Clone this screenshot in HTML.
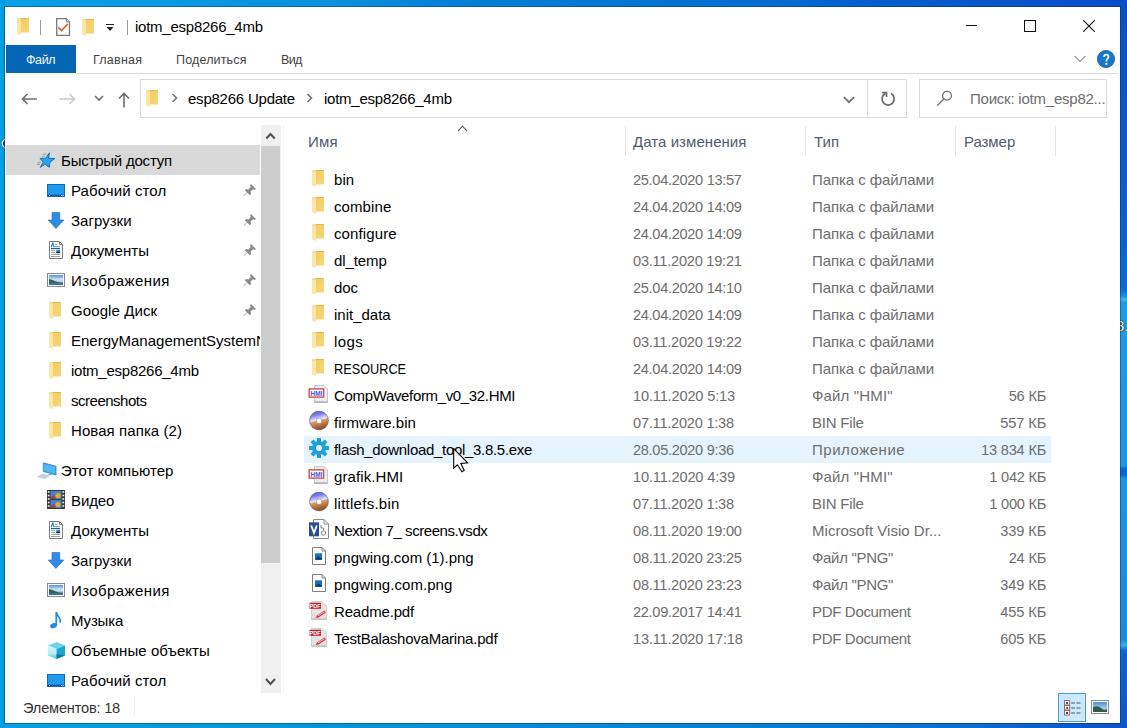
<!DOCTYPE html>
<html><head><meta charset="utf-8">
<style>
html,body{margin:0;padding:0;}
body{width:1127px;height:728px;position:relative;overflow:hidden;font-family:"Liberation Sans", sans-serif;
background:linear-gradient(90deg,#07A0E8 0%,#0A84DA 40%,#0470D6 60%,#0B4FC8 97%,#1E9BE0 100%);}
.t{position:absolute;white-space:nowrap;}
.win{position:absolute;left:4px;top:6px;width:1115px;height:716px;background:#fff;border:1px solid rgba(10,40,80,0.42);background-clip:padding-box;}
.abs{position:absolute;}
</style></head><body>
<div class="abs" style="left:0;top:0;width:1127px;height:7px;background:linear-gradient(90deg,#0AA0E8 0%,#0A90DD 30%,#0580D8 40%,#056CCF 70%,#0560CF 75%,#0A4CC6 100%)"></div>
<div class="abs" style="left:0;top:722px;width:1127px;height:6px;background:linear-gradient(90deg,#07A2E2 0%,#0892D8 35%,#0585D4 60%,#0870CF 85%,#0B50C8 100%)"></div>
<div class="abs" style="left:0;top:0;width:5px;height:728px;background:linear-gradient(90deg,#00A2EA,#009DE2 50%,#0E96D0)"></div>
<div class="abs" style="left:1120px;top:0;width:7px;height:728px;background:linear-gradient(180deg,#0B4EC7 0%,#0A5CCF 27.5%,#0A6AD6 39.8%,#1A90DE 40.7%,#3CB8EA 41.1%,#1E9CE0 41.6%,#1E96DE 64%,#0A66D8 64.4%,#0A66D8 65.2%,#1E96DE 65.8%,#1A8CDD 87.9%,#3AB0E8 88.6%,#0A62D2 89.4%,#0B55C8 100%)"></div>
<div class="t" style="left:1116px;top:318px;font-size:15px;line-height:15px;color:#fff;text-shadow:0 0 1.5px #000,0 0 1px #000">8.</div>
<svg class="abs" style="left:0;top:136px" width="8" height="15"><path d="M6.5 2.5 Q3 5 3 7.5 Q3 10 6.5 12.5" fill="none" stroke="#102030" stroke-width="2.6"/><path d="M5.5 2.5 Q2.2 5 2.2 7.5 Q2.2 10 5.5 12.5" fill="none" stroke="#fff" stroke-width="1.3"/></svg>
<div class="win"></div>

<svg style="position:absolute;left:17px;top:18px" width="13" height="18" viewBox="0 0 13 18" ><defs><linearGradient id="fg" x1="0" y1="0" x2="1" y2="1"><stop offset="0" stop-color="#F3CB60"/><stop offset="1" stop-color="#F6D77C"/></linearGradient></defs><rect x="3" y="0" width="9" height="14.5" fill="url(#fg)"/><rect x="3" y="0" width="9" height="1" fill="#E5B84A"/><path d="M0 0.5 H4 V17 L0 15.5 Z" fill="#FBE6A6"/><path d="M0 0.5 H4 V1.5 H0Z" fill="#EFD080"/></svg>
<div class="abs" style="left:40px;top:20px;width:1px;height:15px;background:#9A9A9A"></div>
<svg style="position:absolute;left:56px;top:18px" width="15" height="18" viewBox="0 0 15 18" ><path d="M0.7 0.7 H10.3 L13.5 3.9 V17.3 H0.7 Z" fill="#FAFCFE" stroke="#7A7A7A" stroke-width="1.3"/><path d="M10.3 0.7 V3.9 H13.5" fill="#E8E8E8" stroke="#7A7A7A" stroke-width="1"/><path d="M2.3 9.3 L5.5 12.5 L11.8 6" fill="none" stroke="#DC6028" stroke-width="1.7"/></svg>
<svg style="position:absolute;left:82px;top:19px" width="13" height="18" viewBox="0 0 13 18" ><defs><linearGradient id="fg" x1="0" y1="0" x2="1" y2="1"><stop offset="0" stop-color="#F3CB60"/><stop offset="1" stop-color="#F6D77C"/></linearGradient></defs><rect x="3" y="0" width="9" height="14.5" fill="url(#fg)"/><rect x="3" y="0" width="9" height="1" fill="#E5B84A"/><path d="M0 0.5 H4 V17 L0 15.5 Z" fill="#FBE6A6"/><path d="M0 0.5 H4 V1.5 H0Z" fill="#EFD080"/></svg>
<div class="abs" style="left:106px;top:24px;width:8px;height:1px;background:#222"></div>
<svg style="position:absolute;left:106px;top:27px" width="8" height="5" viewBox="0 0 8 5" ><path d="M0.5 0 H7.5 L4 4Z" fill="#222"/></svg>
<div class="abs" style="left:127px;top:20px;width:1px;height:15px;background:#9A9A9A"></div>
<div class="t" style="left:135px;top:17px;font-size:15px;line-height:20px;color:#000;letter-spacing:-0.248px;">iotm_esp8266_4mb</div>
<div class="abs" style="left:966px;top:25px;width:11px;height:1px;background:#111"></div>
<div class="abs" style="left:1024px;top:20px;width:10px;height:10px;border:1px solid #111"></div>
<svg style="position:absolute;left:1083px;top:20px" width="12" height="12" viewBox="0 0 12 12" ><path d="M0.3 0.3 L11.7 11.7 M11.7 0.3 L0.3 11.7" stroke="#111" stroke-width="1.1"/></svg>
<div class="abs" style="left:6px;top:45px;width:70px;height:28px;background:#0465B4"></div>
<div class="t" style="left:26px;top:52px;font-size:12.5px;line-height:16px;color:#F4F8FF;letter-spacing:-0.413px;">Файл</div>
<div class="t" style="left:93px;top:52px;font-size:12.5px;line-height:16px;color:#444;letter-spacing:0.232px;">Главная</div>
<div class="t" style="left:176px;top:52px;font-size:12.5px;line-height:16px;color:#444;letter-spacing:0.16px;">Поделиться</div>
<div class="t" style="left:281px;top:52px;font-size:12.5px;line-height:16px;color:#444;letter-spacing:-0.61px;">Вид</div>
<div class="abs" style="left:76px;top:73px;width:1042px;height:1px;background:#DADBDC"></div>
<svg style="position:absolute;left:1074px;top:55px" width="12" height="8" viewBox="0 0 12 8" ><path d="M0.5 1 L6 6.5 L11.5 1" fill="none" stroke="#9A9A9A" stroke-width="1.2"/></svg>
<svg style="position:absolute;left:1097px;top:50px" width="18" height="18" viewBox="0 0 18 18" ><circle cx="9" cy="9" r="8.6" fill="#1776CC" stroke="#0E5CAA" stroke-width="0.8"/><path d="M7.1 6.9 Q7.1 4.6 9.3 4.6 Q11.5 4.6 11.5 6.6 Q11.5 8 10.3 8.9 Q9.3 9.6 9.3 11.6" fill="none" stroke="#E8FAFF" stroke-width="1.8"/><rect x="8.3" y="12.8" width="2" height="2" fill="#E8FAFF"/></svg>
<svg style="position:absolute;left:21px;top:93px" width="17" height="12" viewBox="0 0 17 12" ><path d="M1.5 6 H16 M6.5 1 L1.5 6 L6.5 11" fill="none" stroke="#6D6D6D" stroke-width="1.6"/></svg>
<svg style="position:absolute;left:59px;top:93px" width="17" height="12" viewBox="0 0 17 12" ><path d="M0.5 6 H15 M10.5 1 L15.5 6 L10.5 11" fill="none" stroke="#C9C9C9" stroke-width="1.6"/></svg>
<svg style="position:absolute;left:94px;top:95px" width="10" height="7" viewBox="0 0 10 7" ><path d="M1 1 L5 5 L9 1" fill="none" stroke="#6D6D6D" stroke-width="1.6"/></svg>
<svg style="position:absolute;left:118px;top:92px" width="12" height="16" viewBox="0 0 12 16" ><path d="M6 15.5 V1.5 M1 6.5 L6 1.5 L11 6.5" fill="none" stroke="#6D6D6D" stroke-width="1.6"/></svg>
<div class="abs" style="left:140px;top:79px;width:765px;height:37px;border:1px solid #D9D9D9"></div>
<svg style="position:absolute;left:146px;top:90px" width="13" height="18" viewBox="0 0 13 18" ><defs><linearGradient id="fg" x1="0" y1="0" x2="1" y2="1"><stop offset="0" stop-color="#F3CB60"/><stop offset="1" stop-color="#F6D77C"/></linearGradient></defs><rect x="3" y="0" width="9" height="14.5" fill="url(#fg)"/><rect x="3" y="0" width="9" height="1" fill="#E5B84A"/><path d="M0 0.5 H4 V17 L0 15.5 Z" fill="#FBE6A6"/><path d="M0 0.5 H4 V1.5 H0Z" fill="#EFD080"/></svg>
<svg style="position:absolute;left:171px;top:93px" width="8" height="10" viewBox="0 0 8 10" ><path d="M1.5 1 L5.5 5 L1.5 9" fill="none" stroke="#6D6D6D" stroke-width="1.5"/></svg>
<div class="t" style="left:188px;top:89px;font-size:15px;line-height:20px;color:#000;letter-spacing:-0.227px;">esp8266 Update</div>
<svg style="position:absolute;left:306px;top:93px" width="8" height="10" viewBox="0 0 8 10" ><path d="M1.5 1 L5.5 5 L1.5 9" fill="none" stroke="#6D6D6D" stroke-width="1.5"/></svg>
<div class="t" style="left:324px;top:89px;font-size:15px;line-height:20px;color:#000;letter-spacing:-0.248px;">iotm_esp8266_4mb</div>
<svg style="position:absolute;left:843px;top:96px" width="12" height="8" viewBox="0 0 12 8" ><path d="M0.8 1 L6 6.2 L11.2 1" fill="none" stroke="#6D6D6D" stroke-width="1.7"/></svg>
<div class="abs" style="left:867px;top:80px;width:1px;height:37px;background:#D9D9D9"></div>
<svg style="position:absolute;left:880px;top:91px" width="16" height="16" viewBox="0 0 16 16" ><path d="M11 2.6 A6.1 6.1 0 1 1 5.6 2.4" fill="none" stroke="#6A6A6A" stroke-width="1.7"/><path d="M2.2 1.7 H6.5 V5.9" fill="none" stroke="#6A6A6A" stroke-width="1.7"/></svg>
<div class="abs" style="left:919px;top:79px;width:186px;height:37px;border:1px solid #D9D9D9"></div>
<svg style="position:absolute;left:936px;top:90px" width="17" height="17" viewBox="0 0 17 17" ><circle cx="11" cy="5.8" r="4.4" fill="none" stroke="#6A6A6A" stroke-width="1.2"/><path d="M7.8 9 L1.2 15.6" stroke="#6A6A6A" stroke-width="1.3"/></svg>
<div class="t" style="left:970px;top:89px;font-size:15px;line-height:20px;color:#6D6D6D;letter-spacing:-0.225px;">Поиск: iotm_esp82...</div>
<div class="abs" style="left:625px;top:126px;width:1px;height:30px;background:#E5E5E5"></div>
<div class="abs" style="left:805px;top:126px;width:1px;height:30px;background:#E5E5E5"></div>
<div class="abs" style="left:955px;top:126px;width:1px;height:30px;background:#E5E5E5"></div>
<div class="abs" style="left:1055px;top:126px;width:1px;height:30px;background:#E5E5E5"></div>
<svg style="position:absolute;left:457px;top:125px" width="11" height="7" viewBox="0 0 11 7" ><path d="M1 6 L5.5 1.2 L10 6" fill="none" stroke="#5A5A5A" stroke-width="1.1"/></svg>
<div class="t" style="left:308px;top:132px;font-size:15px;line-height:20px;color:#4E5B6E;letter-spacing:0.253px;">Имя</div>
<div class="t" style="left:633px;top:132px;font-size:15px;line-height:20px;color:#4E5B6E;letter-spacing:0.055px;">Дата изменения</div>
<div class="t" style="left:814px;top:132px;font-size:15px;line-height:20px;color:#4E5B6E;">Тип</div>
<div class="t" style="left:964px;top:132px;font-size:15px;line-height:20px;color:#4E5B6E;letter-spacing:-0.063px;">Размер</div>
<svg style="position:absolute;left:312px;top:170px" width="13" height="18" viewBox="0 0 13 18" ><defs><linearGradient id="fg" x1="0" y1="0" x2="1" y2="1"><stop offset="0" stop-color="#F3CB60"/><stop offset="1" stop-color="#F6D77C"/></linearGradient></defs><rect x="3" y="0" width="9" height="14.5" fill="url(#fg)"/><rect x="3" y="0" width="9" height="1" fill="#E5B84A"/><path d="M0 0.5 H4 V17 L0 15.5 Z" fill="#FBE6A6"/><path d="M0 0.5 H4 V1.5 H0Z" fill="#EFD080"/></svg>
<div class="t" style="left:334px;top:166px;font-size:15px;line-height:27px;color:#000;letter-spacing:0.063px;">bin</div>
<div class="t" style="left:633px;top:167px;font-size:14.6px;line-height:27px;color:#6D6D6D;letter-spacing:-0.313px;">25.04.2020 13:57</div>
<div class="t" style="left:812px;top:166px;font-size:15px;line-height:27px;color:#6D6D6D;letter-spacing:-0.078px;">Папка с файлами</div>
<svg style="position:absolute;left:312px;top:197px" width="13" height="18" viewBox="0 0 13 18" ><defs><linearGradient id="fg" x1="0" y1="0" x2="1" y2="1"><stop offset="0" stop-color="#F3CB60"/><stop offset="1" stop-color="#F6D77C"/></linearGradient></defs><rect x="3" y="0" width="9" height="14.5" fill="url(#fg)"/><rect x="3" y="0" width="9" height="1" fill="#E5B84A"/><path d="M0 0.5 H4 V17 L0 15.5 Z" fill="#FBE6A6"/><path d="M0 0.5 H4 V1.5 H0Z" fill="#EFD080"/></svg>
<div class="t" style="left:334px;top:193px;font-size:15px;line-height:27px;color:#000;letter-spacing:0.091px;">combine</div>
<div class="t" style="left:633px;top:194px;font-size:14.6px;line-height:27px;color:#6D6D6D;letter-spacing:-0.313px;">24.04.2020 14:09</div>
<div class="t" style="left:812px;top:193px;font-size:15px;line-height:27px;color:#6D6D6D;letter-spacing:-0.078px;">Папка с файлами</div>
<svg style="position:absolute;left:312px;top:224px" width="13" height="18" viewBox="0 0 13 18" ><defs><linearGradient id="fg" x1="0" y1="0" x2="1" y2="1"><stop offset="0" stop-color="#F3CB60"/><stop offset="1" stop-color="#F6D77C"/></linearGradient></defs><rect x="3" y="0" width="9" height="14.5" fill="url(#fg)"/><rect x="3" y="0" width="9" height="1" fill="#E5B84A"/><path d="M0 0.5 H4 V17 L0 15.5 Z" fill="#FBE6A6"/><path d="M0 0.5 H4 V1.5 H0Z" fill="#EFD080"/></svg>
<div class="t" style="left:334px;top:220px;font-size:15px;line-height:27px;color:#000;letter-spacing:0.117px;">configure</div>
<div class="t" style="left:633px;top:221px;font-size:14.6px;line-height:27px;color:#6D6D6D;letter-spacing:-0.313px;">24.04.2020 14:09</div>
<div class="t" style="left:812px;top:220px;font-size:15px;line-height:27px;color:#6D6D6D;letter-spacing:-0.078px;">Папка с файлами</div>
<svg style="position:absolute;left:312px;top:251px" width="13" height="18" viewBox="0 0 13 18" ><defs><linearGradient id="fg" x1="0" y1="0" x2="1" y2="1"><stop offset="0" stop-color="#F3CB60"/><stop offset="1" stop-color="#F6D77C"/></linearGradient></defs><rect x="3" y="0" width="9" height="14.5" fill="url(#fg)"/><rect x="3" y="0" width="9" height="1" fill="#E5B84A"/><path d="M0 0.5 H4 V17 L0 15.5 Z" fill="#FBE6A6"/><path d="M0 0.5 H4 V1.5 H0Z" fill="#EFD080"/></svg>
<div class="t" style="left:334px;top:247px;font-size:15px;line-height:27px;color:#000;letter-spacing:-0.087px;">dl_temp</div>
<div class="t" style="left:633px;top:248px;font-size:14.6px;line-height:27px;color:#6D6D6D;letter-spacing:-0.241px;">03.11.2020 19:21</div>
<div class="t" style="left:812px;top:247px;font-size:15px;line-height:27px;color:#6D6D6D;letter-spacing:-0.078px;">Папка с файлами</div>
<svg style="position:absolute;left:312px;top:278px" width="13" height="18" viewBox="0 0 13 18" ><defs><linearGradient id="fg" x1="0" y1="0" x2="1" y2="1"><stop offset="0" stop-color="#F3CB60"/><stop offset="1" stop-color="#F6D77C"/></linearGradient></defs><rect x="3" y="0" width="9" height="14.5" fill="url(#fg)"/><rect x="3" y="0" width="9" height="1" fill="#E5B84A"/><path d="M0 0.5 H4 V17 L0 15.5 Z" fill="#FBE6A6"/><path d="M0 0.5 H4 V1.5 H0Z" fill="#EFD080"/></svg>
<div class="t" style="left:334px;top:274px;font-size:15px;line-height:27px;color:#000;letter-spacing:-0.092px;">doc</div>
<div class="t" style="left:633px;top:275px;font-size:14.6px;line-height:27px;color:#6D6D6D;letter-spacing:-0.313px;">25.04.2020 14:10</div>
<div class="t" style="left:812px;top:274px;font-size:15px;line-height:27px;color:#6D6D6D;letter-spacing:-0.078px;">Папка с файлами</div>
<svg style="position:absolute;left:312px;top:305px" width="13" height="18" viewBox="0 0 13 18" ><defs><linearGradient id="fg" x1="0" y1="0" x2="1" y2="1"><stop offset="0" stop-color="#F3CB60"/><stop offset="1" stop-color="#F6D77C"/></linearGradient></defs><rect x="3" y="0" width="9" height="14.5" fill="url(#fg)"/><rect x="3" y="0" width="9" height="1" fill="#E5B84A"/><path d="M0 0.5 H4 V17 L0 15.5 Z" fill="#FBE6A6"/><path d="M0 0.5 H4 V1.5 H0Z" fill="#EFD080"/></svg>
<div class="t" style="left:334px;top:301px;font-size:15px;line-height:27px;color:#000;letter-spacing:-0.009px;">init_data</div>
<div class="t" style="left:633px;top:302px;font-size:14.6px;line-height:27px;color:#6D6D6D;letter-spacing:-0.313px;">24.04.2020 14:09</div>
<div class="t" style="left:812px;top:301px;font-size:15px;line-height:27px;color:#6D6D6D;letter-spacing:-0.078px;">Папка с файлами</div>
<svg style="position:absolute;left:312px;top:332px" width="13" height="18" viewBox="0 0 13 18" ><defs><linearGradient id="fg" x1="0" y1="0" x2="1" y2="1"><stop offset="0" stop-color="#F3CB60"/><stop offset="1" stop-color="#F6D77C"/></linearGradient></defs><rect x="3" y="0" width="9" height="14.5" fill="url(#fg)"/><rect x="3" y="0" width="9" height="1" fill="#E5B84A"/><path d="M0 0.5 H4 V17 L0 15.5 Z" fill="#FBE6A6"/><path d="M0 0.5 H4 V1.5 H0Z" fill="#EFD080"/></svg>
<div class="t" style="left:334px;top:328px;font-size:15px;line-height:27px;color:#000;letter-spacing:0.428px;">logs</div>
<div class="t" style="left:633px;top:329px;font-size:14.6px;line-height:27px;color:#6D6D6D;letter-spacing:-0.241px;">03.11.2020 19:22</div>
<div class="t" style="left:812px;top:328px;font-size:15px;line-height:27px;color:#6D6D6D;letter-spacing:-0.078px;">Папка с файлами</div>
<svg style="position:absolute;left:312px;top:359px" width="13" height="18" viewBox="0 0 13 18" ><defs><linearGradient id="fg" x1="0" y1="0" x2="1" y2="1"><stop offset="0" stop-color="#F3CB60"/><stop offset="1" stop-color="#F6D77C"/></linearGradient></defs><rect x="3" y="0" width="9" height="14.5" fill="url(#fg)"/><rect x="3" y="0" width="9" height="1" fill="#E5B84A"/><path d="M0 0.5 H4 V17 L0 15.5 Z" fill="#FBE6A6"/><path d="M0 0.5 H4 V1.5 H0Z" fill="#EFD080"/></svg>
<div class="t" style="left:334px;top:355px;font-size:15px;line-height:27px;color:#000;transform:scaleX(0.848);transform-origin:0 0">RESOURCE</div>
<div class="t" style="left:633px;top:356px;font-size:14.6px;line-height:27px;color:#6D6D6D;letter-spacing:-0.313px;">24.04.2020 14:09</div>
<div class="t" style="left:812px;top:355px;font-size:15px;line-height:27px;color:#6D6D6D;letter-spacing:-0.078px;">Папка с файлами</div>
<svg style="position:absolute;left:308px;top:384px" width="21" height="20" viewBox="0 0 21 20" ><path d="M6.5 1.5 H16 L19.5 5 V18.5 H6.5Z" fill="#ECEDF2" stroke="#C4C6D0"/><path d="M6.5 18 H19.5" stroke="#9A9CA8" stroke-width="1"/><rect x="1.2" y="4.9" width="14.4" height="8.2" fill="#fff" stroke="#C85050" stroke-width="1.4"/><text x="8.4" y="11.9" text-anchor="middle" font-family="Liberation Sans" font-weight="bold" font-size="7.8" textLength="11.8" lengthAdjust="spacingAndGlyphs" fill="#4A50D8">HMI</text></svg>
<div class="t" style="left:334px;top:382px;font-size:15px;line-height:27px;color:#000;letter-spacing:-0.343px;">CompWaveform_v0_32.HMI</div>
<div class="t" style="left:633px;top:383px;font-size:14.6px;line-height:27px;color:#6D6D6D;letter-spacing:-0.164px;">10.11.2020 5:13</div>
<div class="t" style="left:812px;top:382px;font-size:15px;line-height:27px;color:#6D6D6D;letter-spacing:0.148px;">Файл "HMI"</div>
<div class="t" style="right:81px;top:383px;font-size:14.6px;line-height:27px;color:#6D6D6D;letter-spacing:-0.172px;margin-right:-0.172px">56 КБ</div>
<svg style="position:absolute;left:309px;top:411px" width="20" height="20" viewBox="0 0 20 20" ><defs><linearGradient id="dg" x1="0.3" y1="0" x2="0.55" y2="1"><stop offset="0" stop-color="#5E5CE8"/><stop offset="0.2" stop-color="#7E7CF0"/><stop offset="0.47" stop-color="#ECECF6"/><stop offset="0.53" stop-color="#D8A070"/><stop offset="0.8" stop-color="#B06A30"/><stop offset="1" stop-color="#8A4A20"/></linearGradient></defs><circle cx="10" cy="9.5" r="9.4" fill="url(#dg)" stroke="#6A6070" stroke-width="0.7"/><rect x="7.6" y="7.2" width="5" height="5" rx="1.5" fill="#fff" stroke="#8A8A90" stroke-width="0.6"/></svg>
<div class="t" style="left:334px;top:409px;font-size:15px;line-height:27px;color:#000;letter-spacing:0.014px;">firmware.bin</div>
<div class="t" style="left:633px;top:410px;font-size:14.6px;line-height:27px;color:#6D6D6D;letter-spacing:-0.236px;">07.11.2020 1:38</div>
<div class="t" style="left:812px;top:409px;font-size:15px;line-height:27px;color:#6D6D6D;letter-spacing:-0.214px;">BIN File</div>
<div class="t" style="right:81px;top:410px;font-size:14.6px;line-height:27px;color:#6D6D6D;letter-spacing:-0.121px;margin-right:-0.121px">557 КБ</div>
<div class="abs" style="left:304px;top:436px;width:747px;height:27px;background:#E5F3FF"></div>
<svg style="position:absolute;left:309px;top:438px" width="20" height="20" viewBox="0 0 20 20" ><rect x="8" y="0" width="4" height="5" fill="#1EA0DC" transform="rotate(0 10 10)"/><rect x="8" y="0" width="4" height="5" fill="#1EA0DC" transform="rotate(45 10 10)"/><rect x="8" y="0" width="4" height="5" fill="#1EA0DC" transform="rotate(90 10 10)"/><rect x="8" y="0" width="4" height="5" fill="#1EA0DC" transform="rotate(135 10 10)"/><rect x="8" y="0" width="4" height="5" fill="#1EA0DC" transform="rotate(180 10 10)"/><rect x="8" y="0" width="4" height="5" fill="#1EA0DC" transform="rotate(225 10 10)"/><rect x="8" y="0" width="4" height="5" fill="#1EA0DC" transform="rotate(270 10 10)"/><rect x="8" y="0" width="4" height="5" fill="#1EA0DC" transform="rotate(315 10 10)"/><circle cx="10" cy="10" r="7" fill="#1EA0DC"/><circle cx="10" cy="10" r="3" fill="#E5F3FF"/></svg>
<div class="t" style="left:334px;top:436px;font-size:15px;line-height:27px;color:#000;letter-spacing:-0.303px;">flash_download_tool_3.8.5.exe</div>
<div class="t" style="left:633px;top:437px;font-size:14.6px;line-height:27px;color:#6D6D6D;letter-spacing:-0.313px;">28.05.2020 9:36</div>
<div class="t" style="left:812px;top:436px;font-size:15px;line-height:27px;color:#6D6D6D;letter-spacing:0.518px;">Приложение</div>
<div class="t" style="right:81px;top:437px;font-size:14.6px;line-height:27px;color:#6D6D6D;letter-spacing:-0.174px;margin-right:-0.174px">13 834 КБ</div>
<svg style="position:absolute;left:308px;top:465px" width="21" height="20" viewBox="0 0 21 20" ><path d="M6.5 1.5 H16 L19.5 5 V18.5 H6.5Z" fill="#ECEDF2" stroke="#C4C6D0"/><path d="M6.5 18 H19.5" stroke="#9A9CA8" stroke-width="1"/><rect x="1.2" y="4.9" width="14.4" height="8.2" fill="#fff" stroke="#C85050" stroke-width="1.4"/><text x="8.4" y="11.9" text-anchor="middle" font-family="Liberation Sans" font-weight="bold" font-size="7.8" textLength="11.8" lengthAdjust="spacingAndGlyphs" fill="#4A50D8">HMI</text></svg>
<div class="t" style="left:334px;top:463px;font-size:15px;line-height:27px;color:#000;letter-spacing:0.092px;">grafik.HMI</div>
<div class="t" style="left:633px;top:464px;font-size:14.6px;line-height:27px;color:#6D6D6D;letter-spacing:-0.164px;">10.11.2020 4:39</div>
<div class="t" style="left:812px;top:463px;font-size:15px;line-height:27px;color:#6D6D6D;letter-spacing:0.148px;">Файл "HMI"</div>
<div class="t" style="right:81px;top:464px;font-size:14.6px;line-height:27px;color:#6D6D6D;letter-spacing:-0.211px;margin-right:-0.211px">1 042 КБ</div>
<svg style="position:absolute;left:309px;top:492px" width="20" height="20" viewBox="0 0 20 20" ><defs><linearGradient id="dg" x1="0.3" y1="0" x2="0.55" y2="1"><stop offset="0" stop-color="#5E5CE8"/><stop offset="0.2" stop-color="#7E7CF0"/><stop offset="0.47" stop-color="#ECECF6"/><stop offset="0.53" stop-color="#D8A070"/><stop offset="0.8" stop-color="#B06A30"/><stop offset="1" stop-color="#8A4A20"/></linearGradient></defs><circle cx="10" cy="9.5" r="9.4" fill="url(#dg)" stroke="#6A6070" stroke-width="0.7"/><rect x="7.6" y="7.2" width="5" height="5" rx="1.5" fill="#fff" stroke="#8A8A90" stroke-width="0.6"/></svg>
<div class="t" style="left:334px;top:490px;font-size:15px;line-height:27px;color:#000;letter-spacing:0.256px;">littlefs.bin</div>
<div class="t" style="left:633px;top:491px;font-size:14.6px;line-height:27px;color:#6D6D6D;letter-spacing:-0.236px;">07.11.2020 1:38</div>
<div class="t" style="left:812px;top:490px;font-size:15px;line-height:27px;color:#6D6D6D;letter-spacing:-0.214px;">BIN File</div>
<div class="t" style="right:81px;top:491px;font-size:14.6px;line-height:27px;color:#6D6D6D;letter-spacing:-0.211px;margin-right:-0.211px">1 000 КБ</div>
<svg style="position:absolute;left:308px;top:519px" width="22" height="21" viewBox="0 0 22 21" ><path d="M5.5 0.5 H16 L20.5 5 V19.5 H5.5Z" fill="#fff" stroke="#8A8A8A"/><path d="M16 0.5 V5 H20.5" fill="none" stroke="#8A8A8A"/><rect x="1" y="3.3" width="10" height="14" fill="#2A4F92"/><path d="M3.2 6.5 L6 14 L8.8 6.5" fill="none" stroke="#fff" stroke-width="1.8"/><circle cx="15.5" cy="14" r="2.2" fill="none" stroke="#8A8A8A"/><path d="M13 6 V9 H15.5 V11.5" fill="none" stroke="#8A8A8A"/></svg>
<div class="t" style="left:334px;top:517px;font-size:15px;line-height:27px;color:#000;letter-spacing:-0.437px;">Nextion 7_ screens.vsdx</div>
<div class="t" style="left:633px;top:518px;font-size:14.6px;line-height:27px;color:#6D6D6D;letter-spacing:-0.241px;">08.11.2020 19:00</div>
<div class="t" style="left:812px;top:517px;font-size:15px;line-height:27px;color:#6D6D6D;letter-spacing:0.027px;">Microsoft Visio Dr...</div>
<div class="t" style="right:81px;top:518px;font-size:14.6px;line-height:27px;color:#6D6D6D;letter-spacing:-0.121px;margin-right:-0.121px">339 КБ</div>
<svg style="position:absolute;left:312px;top:547px" width="15" height="19" viewBox="0 0 15 19" ><path d="M0.5 0.5 H10 L13.5 4 V17.5 H0.5Z" fill="#fff" stroke="#7E7E7E"/><path d="M10 0.5 V4 H13.5" fill="none" stroke="#7E7E7E"/><rect x="3" y="6.3" width="7" height="6.5" fill="#1F6FBE"/><path d="M3 12.8 L6 9.5 L10 11.5 V12.8Z" fill="#0C3C7A"/></svg>
<div class="t" style="left:334px;top:544px;font-size:15px;line-height:27px;color:#000;letter-spacing:-0.024px;">pngwing.com (1).png</div>
<div class="t" style="left:633px;top:545px;font-size:14.6px;line-height:27px;color:#6D6D6D;letter-spacing:-0.241px;">08.11.2020 23:25</div>
<div class="t" style="left:812px;top:544px;font-size:15px;line-height:27px;color:#6D6D6D;letter-spacing:-0.319px;">Файл "PNG"</div>
<div class="t" style="right:81px;top:545px;font-size:14.6px;line-height:27px;color:#6D6D6D;letter-spacing:-0.172px;margin-right:-0.172px">24 КБ</div>
<svg style="position:absolute;left:312px;top:574px" width="15" height="19" viewBox="0 0 15 19" ><path d="M0.5 0.5 H10 L13.5 4 V17.5 H0.5Z" fill="#fff" stroke="#7E7E7E"/><path d="M10 0.5 V4 H13.5" fill="none" stroke="#7E7E7E"/><rect x="3" y="6.3" width="7" height="6.5" fill="#1F6FBE"/><path d="M3 12.8 L6 9.5 L10 11.5 V12.8Z" fill="#0C3C7A"/></svg>
<div class="t" style="left:334px;top:571px;font-size:15px;line-height:27px;color:#000;letter-spacing:0.055px;">pngwing.com.png</div>
<div class="t" style="left:633px;top:572px;font-size:14.6px;line-height:27px;color:#6D6D6D;letter-spacing:-0.241px;">08.11.2020 23:23</div>
<div class="t" style="left:812px;top:571px;font-size:15px;line-height:27px;color:#6D6D6D;letter-spacing:-0.319px;">Файл "PNG"</div>
<div class="t" style="right:81px;top:572px;font-size:14.6px;line-height:27px;color:#6D6D6D;letter-spacing:-0.121px;margin-right:-0.121px">349 КБ</div>
<svg style="position:absolute;left:309px;top:601px" width="19" height="21" viewBox="0 0 19 21" ><path d="M2.5 0.5 H13 L17.5 5 V18.5 H2.5Z" fill="#E4E4E4" stroke="#D0D0D0"/><path d="M2.5 18 H17.5" stroke="#B8B8B8"/><rect x="0.5" y="1.8" width="11.5" height="6" fill="#C41E28"/><text x="6.2" y="6.8" text-anchor="middle" font-family="Liberation Sans" font-weight="bold" font-size="5.6" fill="#fff">PDF</text><path d="M6.5 17 L8 14.5 L15.5 9.5 L17 11.5 L9.5 16.5Z" fill="#D8303A"/><path d="M9 14.8 L15.5 10.8" stroke="#fff" stroke-width="0.7"/></svg>
<div class="t" style="left:334px;top:598px;font-size:15px;line-height:27px;color:#000;letter-spacing:-0.172px;">Readme.pdf</div>
<div class="t" style="left:633px;top:599px;font-size:14.6px;line-height:27px;color:#6D6D6D;letter-spacing:-0.313px;">22.09.2017 14:41</div>
<div class="t" style="left:812px;top:598px;font-size:15px;line-height:27px;color:#6D6D6D;letter-spacing:-0.324px;">PDF Document</div>
<div class="t" style="right:81px;top:599px;font-size:14.6px;line-height:27px;color:#6D6D6D;letter-spacing:-0.121px;margin-right:-0.121px">455 КБ</div>
<svg style="position:absolute;left:309px;top:628px" width="19" height="21" viewBox="0 0 19 21" ><path d="M2.5 0.5 H13 L17.5 5 V18.5 H2.5Z" fill="#E4E4E4" stroke="#D0D0D0"/><path d="M2.5 18 H17.5" stroke="#B8B8B8"/><rect x="0.5" y="1.8" width="11.5" height="6" fill="#C41E28"/><text x="6.2" y="6.8" text-anchor="middle" font-family="Liberation Sans" font-weight="bold" font-size="5.6" fill="#fff">PDF</text><path d="M6.5 17 L8 14.5 L15.5 9.5 L17 11.5 L9.5 16.5Z" fill="#D8303A"/><path d="M9 14.8 L15.5 10.8" stroke="#fff" stroke-width="0.7"/></svg>
<div class="t" style="left:334px;top:625px;font-size:15px;line-height:27px;color:#000;letter-spacing:-0.221px;">TestBalashovaMarina.pdf</div>
<div class="t" style="left:633px;top:626px;font-size:14.6px;line-height:27px;color:#6D6D6D;letter-spacing:-0.174px;">13.11.2020 17:18</div>
<div class="t" style="left:812px;top:625px;font-size:15px;line-height:27px;color:#6D6D6D;letter-spacing:-0.324px;">PDF Document</div>
<div class="t" style="right:81px;top:626px;font-size:14.6px;line-height:27px;color:#6D6D6D;letter-spacing:-0.121px;margin-right:-0.121px">605 КБ</div>
<div class="abs" style="left:6px;top:145px;width:254px;height:30px;background:#D9D9D9"></div>
<div class="abs" style="left:0px;top:0px;width:260px;height:693px;overflow:hidden">
<svg style="position:absolute;left:36px;top:151px" width="21" height="18" viewBox="0 0 21 18" ><path d="M13.5 1.8 L12.4 7.3 L18.9 7.5 L14 11.2 L13.3 16.3 L9 13.3 L4.3 16.3 L7.2 11.2 L4 7.4 L9.6 7.3 Z" fill="#22A6EE" stroke="#1C6CB8" stroke-width="1" stroke-linejoin="round"/><path d="M7 3.1 H10.5 M6 5.2 H9 M1.6 11.3 H5 M1 13.3 H4" stroke="#6A7A90" stroke-width="0.8" opacity="0.8"/></svg>
<div class="t" style="left:61px;top:146px;font-size:15px;line-height:30px;color:#000;letter-spacing:-0.215px;">Быстрый доступ</div>
<svg style="position:absolute;left:47px;top:184px" width="18" height="13" viewBox="0 0 18 13" ><rect x="0.5" y="0.5" width="17" height="12" fill="#1E9AEE" stroke="#1468B8"/><rect x="1" y="10.6" width="16" height="1.8" fill="#0F5EAE"/><rect x="2" y="11" width="1" height="1" fill="#fff"/><rect x="14" y="11" width="1" height="1" fill="#fff"/><rect x="15.6" y="11" width="1" height="1" fill="#fff"/></svg>
<div class="t" style="left:71px;top:176px;font-size:15px;line-height:30px;color:#000;letter-spacing:0.09px;">Рабочий стол</div>
<svg style="position:absolute;left:243px;top:183px" width="14" height="14" viewBox="0 0 14 14" ><g fill="#8A8A8A"><path d="M8 1 L13 6 L11.6 7 L10 6.2 L7.6 8.6 L8 11 L6.8 12.2 L1.8 7.2 L3 6 L5.4 6.4 L7.8 4 L7 2.4 Z"/><path d="M4.2 9.8 L1 13 L0.6 12.6 L3.8 9.4Z"/></g></svg>
<svg style="position:absolute;left:48px;top:212px" width="16" height="17" viewBox="0 0 16 17" ><path d="M4 0.5 H11.8 V8 H15.8 L7.9 16.5 L0.2 8 H4Z" fill="#2E8CE2" stroke="#1E6EC4" stroke-width="0.6"/></svg>
<div class="t" style="left:71px;top:206px;font-size:15px;line-height:30px;color:#000;letter-spacing:0.03px;">Загрузки</div>
<svg style="position:absolute;left:243px;top:213px" width="14" height="14" viewBox="0 0 14 14" ><g fill="#8A8A8A"><path d="M8 1 L13 6 L11.6 7 L10 6.2 L7.6 8.6 L8 11 L6.8 12.2 L1.8 7.2 L3 6 L5.4 6.4 L7.8 4 L7 2.4 Z"/><path d="M4.2 9.8 L1 13 L0.6 12.6 L3.8 9.4Z"/></g></svg>
<svg style="position:absolute;left:49px;top:241px" width="15" height="19" viewBox="0 0 15 19" ><path d="M0.5 0.5 H10.5 L13.5 3.5 V17.5 H0.5Z" fill="#fff" stroke="#7C7C7C"/><path d="M10.5 0.5 V3.5 H13.5" fill="none" stroke="#7C7C7C"/><path d="M2.2 6 L3.8 2 L5 6" fill="none" stroke="#2A80C8" stroke-width="1.2"/><path d="M6 3.5 H8.5 M5.5 5.5 H11" stroke="#5A9AD0" stroke-width="0.9"/><path d="M2 7.5 H11" stroke="#1F5A9A" stroke-width="1.2"/><path d="M2 9.5 H6 M2 11.5 H6" stroke="#8A9AA8" stroke-width="0.9"/><rect x="7.3" y="8.8" width="3.8" height="3.2" fill="#3A7AC0"/><rect x="7.3" y="11" width="3.8" height="1.2" fill="#102030"/><path d="M2 13.5 H11 M2 15.5 H11" stroke="#8A9AA8" stroke-width="0.9"/></svg>
<div class="t" style="left:71px;top:236px;font-size:15px;line-height:30px;color:#000;letter-spacing:0.095px;">Документы</div>
<svg style="position:absolute;left:243px;top:243px" width="14" height="14" viewBox="0 0 14 14" ><g fill="#8A8A8A"><path d="M8 1 L13 6 L11.6 7 L10 6.2 L7.6 8.6 L8 11 L6.8 12.2 L1.8 7.2 L3 6 L5.4 6.4 L7.8 4 L7 2.4 Z"/><path d="M4.2 9.8 L1 13 L0.6 12.6 L3.8 9.4Z"/></g></svg>
<svg style="position:absolute;left:47px;top:273px" width="18" height="14" viewBox="0 0 18 14" ><defs><linearGradient id="pg" x1="0" y1="0" x2="0" y2="1"><stop offset="0" stop-color="#5A8EE0"/><stop offset="0.5" stop-color="#D8EEF6"/><stop offset="1" stop-color="#3A70A8"/></linearGradient></defs><rect x="0.5" y="0.5" width="17" height="13" fill="#fff" stroke="#8A8A8A"/><rect x="2" y="2" width="14" height="10" fill="url(#pg)"/><path d="M2 6 Q6 6.5 9 8.5 Q12 9.8 16 9.8 V10.5 H2Z" fill="#2E6A4A"/><path d="M2 10.3 H16 V12 H2Z" fill="#3A6AA8"/></svg>
<div class="t" style="left:71px;top:266px;font-size:15px;line-height:30px;color:#000;letter-spacing:0.415px;">Изображения</div>
<svg style="position:absolute;left:243px;top:273px" width="14" height="14" viewBox="0 0 14 14" ><g fill="#8A8A8A"><path d="M8 1 L13 6 L11.6 7 L10 6.2 L7.6 8.6 L8 11 L6.8 12.2 L1.8 7.2 L3 6 L5.4 6.4 L7.8 4 L7 2.4 Z"/><path d="M4.2 9.8 L1 13 L0.6 12.6 L3.8 9.4Z"/></g></svg>
<svg style="position:absolute;left:49px;top:302px" width="13" height="18" viewBox="0 0 13 18" ><defs><linearGradient id="fg" x1="0" y1="0" x2="1" y2="1"><stop offset="0" stop-color="#F3CB60"/><stop offset="1" stop-color="#F6D77C"/></linearGradient></defs><rect x="3" y="0" width="9" height="14.5" fill="url(#fg)"/><rect x="3" y="0" width="9" height="1" fill="#E5B84A"/><path d="M0 0.5 H4 V17 L0 15.5 Z" fill="#FBE6A6"/><path d="M0 0.5 H4 V1.5 H0Z" fill="#EFD080"/></svg>
<div class="t" style="left:71px;top:296px;font-size:15px;line-height:30px;color:#000;letter-spacing:0.103px;">Google Диск</div>
<svg style="position:absolute;left:243px;top:303px" width="14" height="14" viewBox="0 0 14 14" ><g fill="#8A8A8A"><path d="M8 1 L13 6 L11.6 7 L10 6.2 L7.6 8.6 L8 11 L6.8 12.2 L1.8 7.2 L3 6 L5.4 6.4 L7.8 4 L7 2.4 Z"/><path d="M4.2 9.8 L1 13 L0.6 12.6 L3.8 9.4Z"/></g></svg>
<svg style="position:absolute;left:49px;top:332px" width="13" height="18" viewBox="0 0 13 18" ><defs><linearGradient id="fg" x1="0" y1="0" x2="1" y2="1"><stop offset="0" stop-color="#F3CB60"/><stop offset="1" stop-color="#F6D77C"/></linearGradient></defs><rect x="3" y="0" width="9" height="14.5" fill="url(#fg)"/><rect x="3" y="0" width="9" height="1" fill="#E5B84A"/><path d="M0 0.5 H4 V17 L0 15.5 Z" fill="#FBE6A6"/><path d="M0 0.5 H4 V1.5 H0Z" fill="#EFD080"/></svg>
<div class="t" style="left:71px;top:326px;font-size:15px;line-height:30px;color:#000;">EnergyManagementSystemNodeMCU</div>
<svg style="position:absolute;left:49px;top:362px" width="13" height="18" viewBox="0 0 13 18" ><defs><linearGradient id="fg" x1="0" y1="0" x2="1" y2="1"><stop offset="0" stop-color="#F3CB60"/><stop offset="1" stop-color="#F6D77C"/></linearGradient></defs><rect x="3" y="0" width="9" height="14.5" fill="url(#fg)"/><rect x="3" y="0" width="9" height="1" fill="#E5B84A"/><path d="M0 0.5 H4 V17 L0 15.5 Z" fill="#FBE6A6"/><path d="M0 0.5 H4 V1.5 H0Z" fill="#EFD080"/></svg>
<div class="t" style="left:71px;top:356px;font-size:15px;line-height:30px;color:#000;letter-spacing:-0.248px;">iotm_esp8266_4mb</div>
<svg style="position:absolute;left:49px;top:392px" width="13" height="18" viewBox="0 0 13 18" ><defs><linearGradient id="fg" x1="0" y1="0" x2="1" y2="1"><stop offset="0" stop-color="#F3CB60"/><stop offset="1" stop-color="#F6D77C"/></linearGradient></defs><rect x="3" y="0" width="9" height="14.5" fill="url(#fg)"/><rect x="3" y="0" width="9" height="1" fill="#E5B84A"/><path d="M0 0.5 H4 V17 L0 15.5 Z" fill="#FBE6A6"/><path d="M0 0.5 H4 V1.5 H0Z" fill="#EFD080"/></svg>
<div class="t" style="left:71px;top:386px;font-size:15px;line-height:30px;color:#000;letter-spacing:-0.487px;">screenshots</div>
<svg style="position:absolute;left:49px;top:422px" width="13" height="18" viewBox="0 0 13 18" ><defs><linearGradient id="fg" x1="0" y1="0" x2="1" y2="1"><stop offset="0" stop-color="#F3CB60"/><stop offset="1" stop-color="#F6D77C"/></linearGradient></defs><rect x="3" y="0" width="9" height="14.5" fill="url(#fg)"/><rect x="3" y="0" width="9" height="1" fill="#E5B84A"/><path d="M0 0.5 H4 V17 L0 15.5 Z" fill="#FBE6A6"/><path d="M0 0.5 H4 V1.5 H0Z" fill="#EFD080"/></svg>
<div class="t" style="left:71px;top:416px;font-size:15px;line-height:30px;color:#000;letter-spacing:0.076px;">Новая папка (2)</div>
<svg style="position:absolute;left:36px;top:462px" width="21" height="18" viewBox="0 0 21 18" ><path d="M7.3 0.8 L20 4.3 V13 L7.3 9.5Z" fill="#3EA8EC" stroke="#1F86D0" stroke-width="0.8"/><path d="M8.3 2.2 L19 5 V11.7 L8.3 8.8Z" fill="#56B8F0"/><path d="M13 11.5 L16 12.3 L15 13.5 L12 12.7Z" fill="#9AB0C4"/><path d="M0.3 14.5 L7 11.5 L14.5 13.8 L8.5 17.3Z" fill="#C4D2E0"/></svg>
<div class="t" style="left:61px;top:456px;font-size:15px;line-height:30px;color:#000;letter-spacing:0.014px;">Этот компьютер</div>
<svg style="position:absolute;left:47px;top:490px" width="18" height="19" viewBox="0 0 18 19" ><rect x="0" y="0" width="18" height="19" fill="#3A3A3A"/><rect x="3.5" y="1" width="11" height="8" fill="#4A80D0"/><rect x="3.5" y="10" width="11" height="8" fill="#4A80D0"/><circle cx="11" cy="5.5" r="2.6" fill="#D8B020"/><circle cx="11" cy="14.5" r="2.6" fill="#D8B020"/><path d="M3.5 7 L7 5 L9 9 H3.5Z" fill="#A04050"/><path d="M3.5 16 L7 14 L9 18 H3.5Z" fill="#A04050"/><rect x="0.8" y="1.2" width="1.8" height="1.6" fill="#eee"/><rect x="15.4" y="1.2" width="1.8" height="1.6" fill="#eee"/><rect x="0.8" y="4.7" width="1.8" height="1.6" fill="#eee"/><rect x="15.4" y="4.7" width="1.8" height="1.6" fill="#eee"/><rect x="0.8" y="8.2" width="1.8" height="1.6" fill="#eee"/><rect x="15.4" y="8.2" width="1.8" height="1.6" fill="#eee"/><rect x="0.8" y="11.7" width="1.8" height="1.6" fill="#eee"/><rect x="15.4" y="11.7" width="1.8" height="1.6" fill="#eee"/><rect x="0.8" y="15.2" width="1.8" height="1.6" fill="#eee"/><rect x="15.4" y="15.2" width="1.8" height="1.6" fill="#eee"/></svg>
<div class="t" style="left:71px;top:486px;font-size:15px;line-height:30px;color:#000;letter-spacing:-0.12px;">Видео</div>
<svg style="position:absolute;left:49px;top:521px" width="15" height="19" viewBox="0 0 15 19" ><path d="M0.5 0.5 H10.5 L13.5 3.5 V17.5 H0.5Z" fill="#fff" stroke="#7C7C7C"/><path d="M10.5 0.5 V3.5 H13.5" fill="none" stroke="#7C7C7C"/><path d="M2.2 6 L3.8 2 L5 6" fill="none" stroke="#2A80C8" stroke-width="1.2"/><path d="M6 3.5 H8.5 M5.5 5.5 H11" stroke="#5A9AD0" stroke-width="0.9"/><path d="M2 7.5 H11" stroke="#1F5A9A" stroke-width="1.2"/><path d="M2 9.5 H6 M2 11.5 H6" stroke="#8A9AA8" stroke-width="0.9"/><rect x="7.3" y="8.8" width="3.8" height="3.2" fill="#3A7AC0"/><rect x="7.3" y="11" width="3.8" height="1.2" fill="#102030"/><path d="M2 13.5 H11 M2 15.5 H11" stroke="#8A9AA8" stroke-width="0.9"/></svg>
<div class="t" style="left:71px;top:516px;font-size:15px;line-height:30px;color:#000;letter-spacing:0.095px;">Документы</div>
<svg style="position:absolute;left:48px;top:552px" width="16" height="17" viewBox="0 0 16 17" ><path d="M4 0.5 H11.8 V8 H15.8 L7.9 16.5 L0.2 8 H4Z" fill="#2E8CE2" stroke="#1E6EC4" stroke-width="0.6"/></svg>
<div class="t" style="left:71px;top:546px;font-size:15px;line-height:30px;color:#000;letter-spacing:0.03px;">Загрузки</div>
<svg style="position:absolute;left:47px;top:583px" width="18" height="14" viewBox="0 0 18 14" ><defs><linearGradient id="pg" x1="0" y1="0" x2="0" y2="1"><stop offset="0" stop-color="#5A8EE0"/><stop offset="0.5" stop-color="#D8EEF6"/><stop offset="1" stop-color="#3A70A8"/></linearGradient></defs><rect x="0.5" y="0.5" width="17" height="13" fill="#fff" stroke="#8A8A8A"/><rect x="2" y="2" width="14" height="10" fill="url(#pg)"/><path d="M2 6 Q6 6.5 9 8.5 Q12 9.8 16 9.8 V10.5 H2Z" fill="#2E6A4A"/><path d="M2 10.3 H16 V12 H2Z" fill="#3A6AA8"/></svg>
<div class="t" style="left:71px;top:576px;font-size:15px;line-height:30px;color:#000;letter-spacing:0.415px;">Изображения</div>
<svg style="position:absolute;left:48px;top:611px" width="14" height="18" viewBox="0 0 14 18" ><path d="M8.3 1 V14" stroke="#1F8FE6" stroke-width="1.8"/><ellipse cx="5.6" cy="14.6" rx="3.6" ry="2.6" transform="rotate(-20 5.6 14.6)" fill="#1F8FE6"/><path d="M8.3 1.2 Q9.3 4.5 11.2 6.5 Q13 8.8 12 11.8" fill="none" stroke="#1F8FE6" stroke-width="1.7"/></svg>
<div class="t" style="left:71px;top:606px;font-size:15px;line-height:30px;color:#000;letter-spacing:-0.143px;">Музыка</div>
<svg style="position:absolute;left:47px;top:641px" width="19" height="19" viewBox="0 0 19 19" ><defs><linearGradient id="cl" x1="0" y1="0" x2="0" y2="1"><stop offset="0" stop-color="#D8F6F8"/><stop offset="0.6" stop-color="#B8ECF2"/><stop offset="1" stop-color="#38C4DC"/></linearGradient></defs><path d="M1 4.5 L9.5 1 L18 4.5 L9.5 8Z" fill="#6ED2E8"/><path d="M1 4.5 L9.5 8 V18 L1 14.5Z" fill="url(#cl)"/><path d="M9.5 8 L18 4.5 V14.5 L9.5 18Z" fill="#18A8CC"/><path d="M9.5 13 L18 14.5 L9.5 18Z" fill="#0E7EA8"/></svg>
<div class="t" style="left:71px;top:636px;font-size:15px;line-height:30px;color:#000;letter-spacing:0.059px;">Объемные объекты</div>
<svg style="position:absolute;left:47px;top:674px" width="18" height="13" viewBox="0 0 18 13" ><rect x="0.5" y="0.5" width="17" height="12" fill="#1E9AEE" stroke="#1468B8"/><rect x="1" y="10.6" width="16" height="1.8" fill="#0F5EAE"/><rect x="2" y="11" width="1" height="1" fill="#fff"/><rect x="14" y="11" width="1" height="1" fill="#fff"/><rect x="15.6" y="11" width="1" height="1" fill="#fff"/></svg>
<div class="t" style="left:71px;top:666px;font-size:15px;line-height:30px;color:#000;letter-spacing:0.09px;">Рабочий стол</div>
</div>
<div class="abs" style="left:283px;top:125px;width:1px;height:568px;background:#F4F4F4"></div>
<div class="abs" style="left:261px;top:125px;width:20px;height:568px;background:#F0F0F0"></div>
<div class="abs" style="left:261px;top:146px;width:19px;height:417px;background:#CDCDCD"></div>
<svg style="position:absolute;left:265px;top:131px" width="11" height="9" viewBox="0 0 11 9" ><path d="M1.3 7.5 L5.5 3 L9.7 7.5" fill="none" stroke="#505050" stroke-width="2"/></svg>
<svg style="position:absolute;left:265px;top:678px" width="11" height="8" viewBox="0 0 11 8" ><path d="M1 1 L5.5 6 L10 1" fill="none" stroke="#505050" stroke-width="2"/></svg>
<div class="t" style="left:23px;top:698px;font-size:14.6px;line-height:20px;color:#333;letter-spacing:-0.197px;">Элементов: 18</div>
<div class="abs" style="left:134px;top:698px;width:1px;height:18px;background:#F0F0F0"></div>
<div class="abs" style="left:1058px;top:693px;width:26px;height:27px;background:#CCE8FF;border:1px solid #4A98D6"></div>
<svg style="position:absolute;left:1064px;top:700px" width="18" height="17" viewBox="0 0 18 17" ><rect x="0.5" y="0.5" width="5" height="4.5" fill="#fff" stroke="#8A7070"/><rect x="0.5" y="5.5" width="5" height="4.5" fill="#fff" stroke="#8A7070"/><rect x="0.5" y="10.5" width="5" height="4.5" fill="#fff" stroke="#8A7070"/><rect x="2" y="2" width="2" height="2" fill="#2A5A70"/><rect x="2" y="7" width="2" height="2" fill="#A04040"/><rect x="2" y="12" width="2" height="2" fill="#A02020"/><path d="M7 3 H11 M12.5 3 H16.5 M7 8 H11 M12.5 8 H16.5 M7 13 H11 M12.5 13 H16.5" stroke="#555" stroke-width="1.1"/></svg>
<svg style="position:absolute;left:1091px;top:700px" width="18" height="14" viewBox="0 0 18 14" ><rect x="0.5" y="0.5" width="17" height="13" fill="#fff" stroke="#8A8A8A"/><defs><linearGradient id="lg2" x1="0" y1="0" x2="0" y2="1"><stop offset="0" stop-color="#4C8ED8"/><stop offset="1" stop-color="#E0F0FA"/></linearGradient></defs><rect x="2" y="2" width="14" height="10" fill="url(#lg2)"/><path d="M2 7 Q7 5 10 8 T16 9 V12 H2Z" fill="#2F5F48"/></svg>
<svg style="position:absolute;left:453px;top:448px" width="17" height="26" viewBox="0 0 17 26" ><path d="M0.7 0.7 V20.2 L4.4 16.8 L8.9 23.8 L11.2 22.4 L7.9 15.4 L14.6 14.8Z" fill="#fff" stroke="#000" stroke-width="1.1" stroke-linejoin="miter"/></svg>
</body></html>
